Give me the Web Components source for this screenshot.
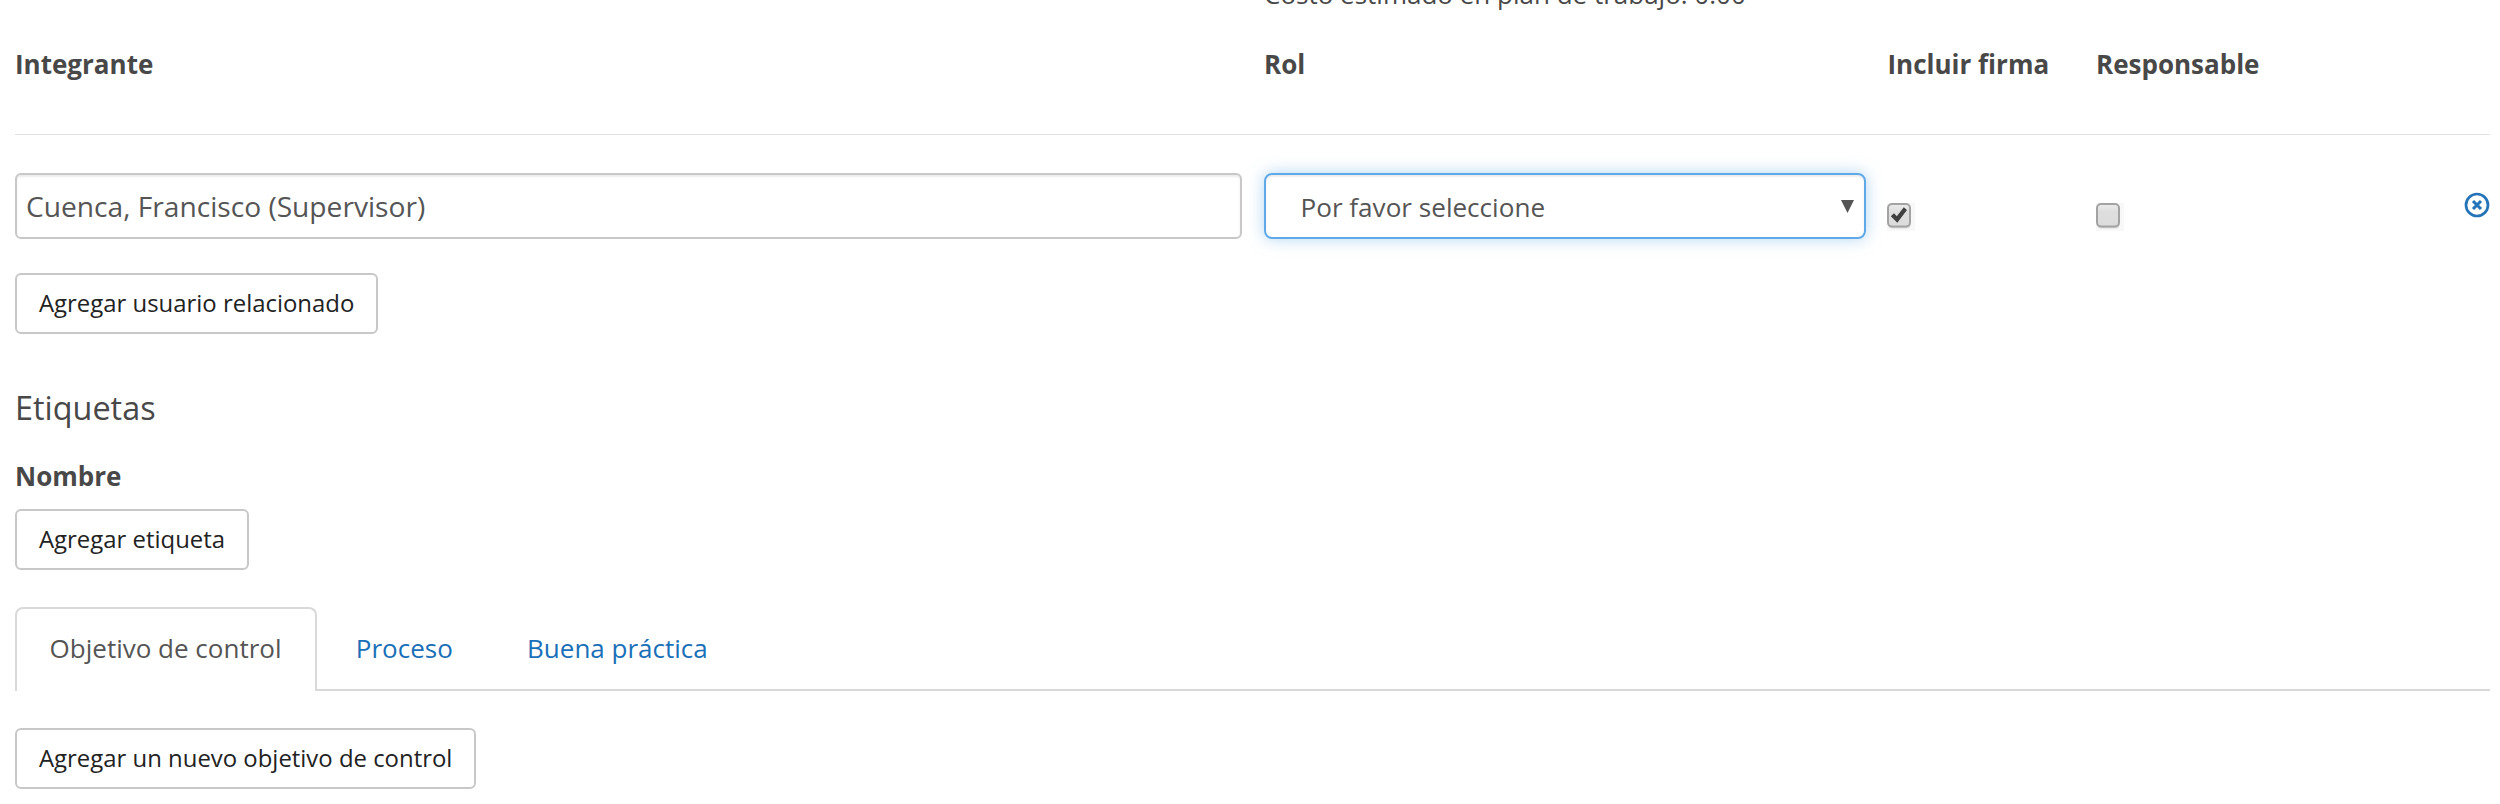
<!DOCTYPE html>
<html lang="es">
<head>
<meta charset="utf-8">
<title>Integrantes</title>
<style>
html,body{margin:0;background:#fff}
html{overflow:hidden}
body{width:2500px;height:804px;overflow:hidden;font-family:"Open Sans",sans-serif;font-size:26px;line-height:36px;color:#484848}
</style>
</head>
<body>
<review-form></review-form>
<script>
const define = (name, html) => customElements.define(name, class extends HTMLElement {
  constructor() {
    super();
    const t = document.createElement('template');
    t.innerHTML = html;
    this.attachShadow({mode: 'open'}).append(t.content.cloneNode(true));
  }
});

define('column-title', `<style>:host{display:block;font-weight:700;white-space:nowrap}</style><slot></slot>`);

define('add-button', `<style>
:host{display:block}
button{display:block;box-sizing:border-box;height:61px;padding:0 22px 2px;border:2px solid #c8c8c8;border-radius:6px;background:#fff;color:#222;font:23.92px/34px "Open Sans",sans-serif;white-space:nowrap}
</style><button type="button"><slot></slot></button>`);

define('text-field', `<style>
:host{display:flex;align-items:center;box-sizing:border-box;height:66px;padding:0 9px;border:2px solid #c8c8c8;border-radius:6px;font-size:28.15px;color:#555;box-shadow:inset 0 2px 2px rgba(0,0,0,.075);white-space:nowrap}
</style><slot></slot>`);

define('select-field', `<style>
:host{display:flex;align-items:center;justify-content:space-between;box-sizing:border-box;height:66px;padding:1px 10px 0 34.5px;border:2px solid #5fa9e9;border-radius:8px;font-size:26.1px;color:#555;box-shadow:inset 0 2px 2px rgba(0,0,0,.075),0 0 15px rgba(102,175,233,.5);white-space:nowrap}
svg{display:block;margin-top:-1px}
</style><slot></slot><svg width="13" height="13"><path d="M0 0H13L6.5 13Z" fill="#555"/></svg>`);

define('check-box', `<style>
:host{display:block;width:28px;height:28px;background:#f8f8f8}
svg{display:block}
:host(:not([checked])) .mark{display:none}
</style><svg width="28" height="28" viewBox="0 0 28 28">
<defs><linearGradient id="g" x2="0" y2="1"><stop stop-color="#ececec"/><stop offset=".35" stop-color="#dedede"/><stop offset="1" stop-color="#dcdcdc"/></linearGradient></defs>
<rect x="1" y="2.5" width="22.5" height="23" rx="4" fill="#000" opacity=".12"/>
<rect x="1" y="1" width="22" height="22.5" rx="4" fill="url(#g)" stroke="#a3a3a3" stroke-width="2"/>
<path class="mark" d="M3.8 13.2L7 10.3L9.8 13.2L16.8 4.2L20 7L10.3 19.8Z" fill="#404040"/></svg>`);

define('remove-link', `<style>:host{display:block}svg{display:block}</style>
<svg width="26" height="26" viewBox="0 0 26 26" fill="none" stroke="#2574b8"><circle cx="13" cy="13" r="11" stroke-width="2.7"/><path d="M9 9L17 17M17 9L9 17" stroke-width="3.1"/></svg>`);

define('tab-item', `<style>
:host{display:block;box-sizing:border-box;height:84px;padding:21px 33.4px 0 32.6px;border:2px solid transparent;border-bottom:0;color:#1a70b8;white-space:nowrap;margin-right:4.3px}
:host([active]){border-color:#d9d9d9;border-radius:8px 8px 0 0;background:#fff;color:#555}
</style><slot></slot>`);

define('tab-bar', `<style>
:host{display:block;height:82px;border-bottom:2px solid #d9d9d9}
div{display:flex}
</style><div><slot></slot></div>`);

define('review-form', `<style>
:host{display:flex;flex-direction:column;box-sizing:border-box;width:2500px;padding:0 10px 0 15px}
.grid{display:grid;grid-template-columns:1227px 601.5px 186.5px 346.5px 26px;column-gap:22px}
.cost{margin:-24px 0 34px;padding-left:1249px;white-space:nowrap}
hr{width:100%;height:1px;border:0;background:#e2e2e2;margin:52px 0 38px}
check-box{margin-top:30px}
check-box[checked]{margin-left:-.5px}
remove-link{margin-top:19px;margin-left:-.5px}
h2{margin:51px 0 0;font-size:32.4px;line-height:44px;font-weight:400}
</style>
<div class="cost">Costo estimado en plan de trabajo: 0.00</div>
<div class="grid"><column-title>Integrante</column-title><column-title>Rol</column-title><column-title>Incluir firma</column-title><column-title>Responsable</column-title></div>
<hr>
<div class="grid"><text-field>Cuenca, Francisco (Supervisor)</text-field><select-field>Por favor seleccione</select-field><check-box checked></check-box><check-box></check-box><remove-link></remove-link></div>
<add-button style="margin-top:34px">Agregar usuario relacionado</add-button>
<h2>Etiquetas</h2>
<column-title style="margin-top:29px">Nombre</column-title>
<add-button style="margin-top:15px">Agregar etiqueta</add-button>
<tab-bar style="margin-top:37px"><tab-item active>Objetivo de control</tab-item><tab-item>Proceso</tab-item><tab-item>Buena práctica</tab-item></tab-bar>
<add-button style="margin-top:37px">Agregar un nuevo objetivo de control</add-button>`);
</script>
</body>
</html>
